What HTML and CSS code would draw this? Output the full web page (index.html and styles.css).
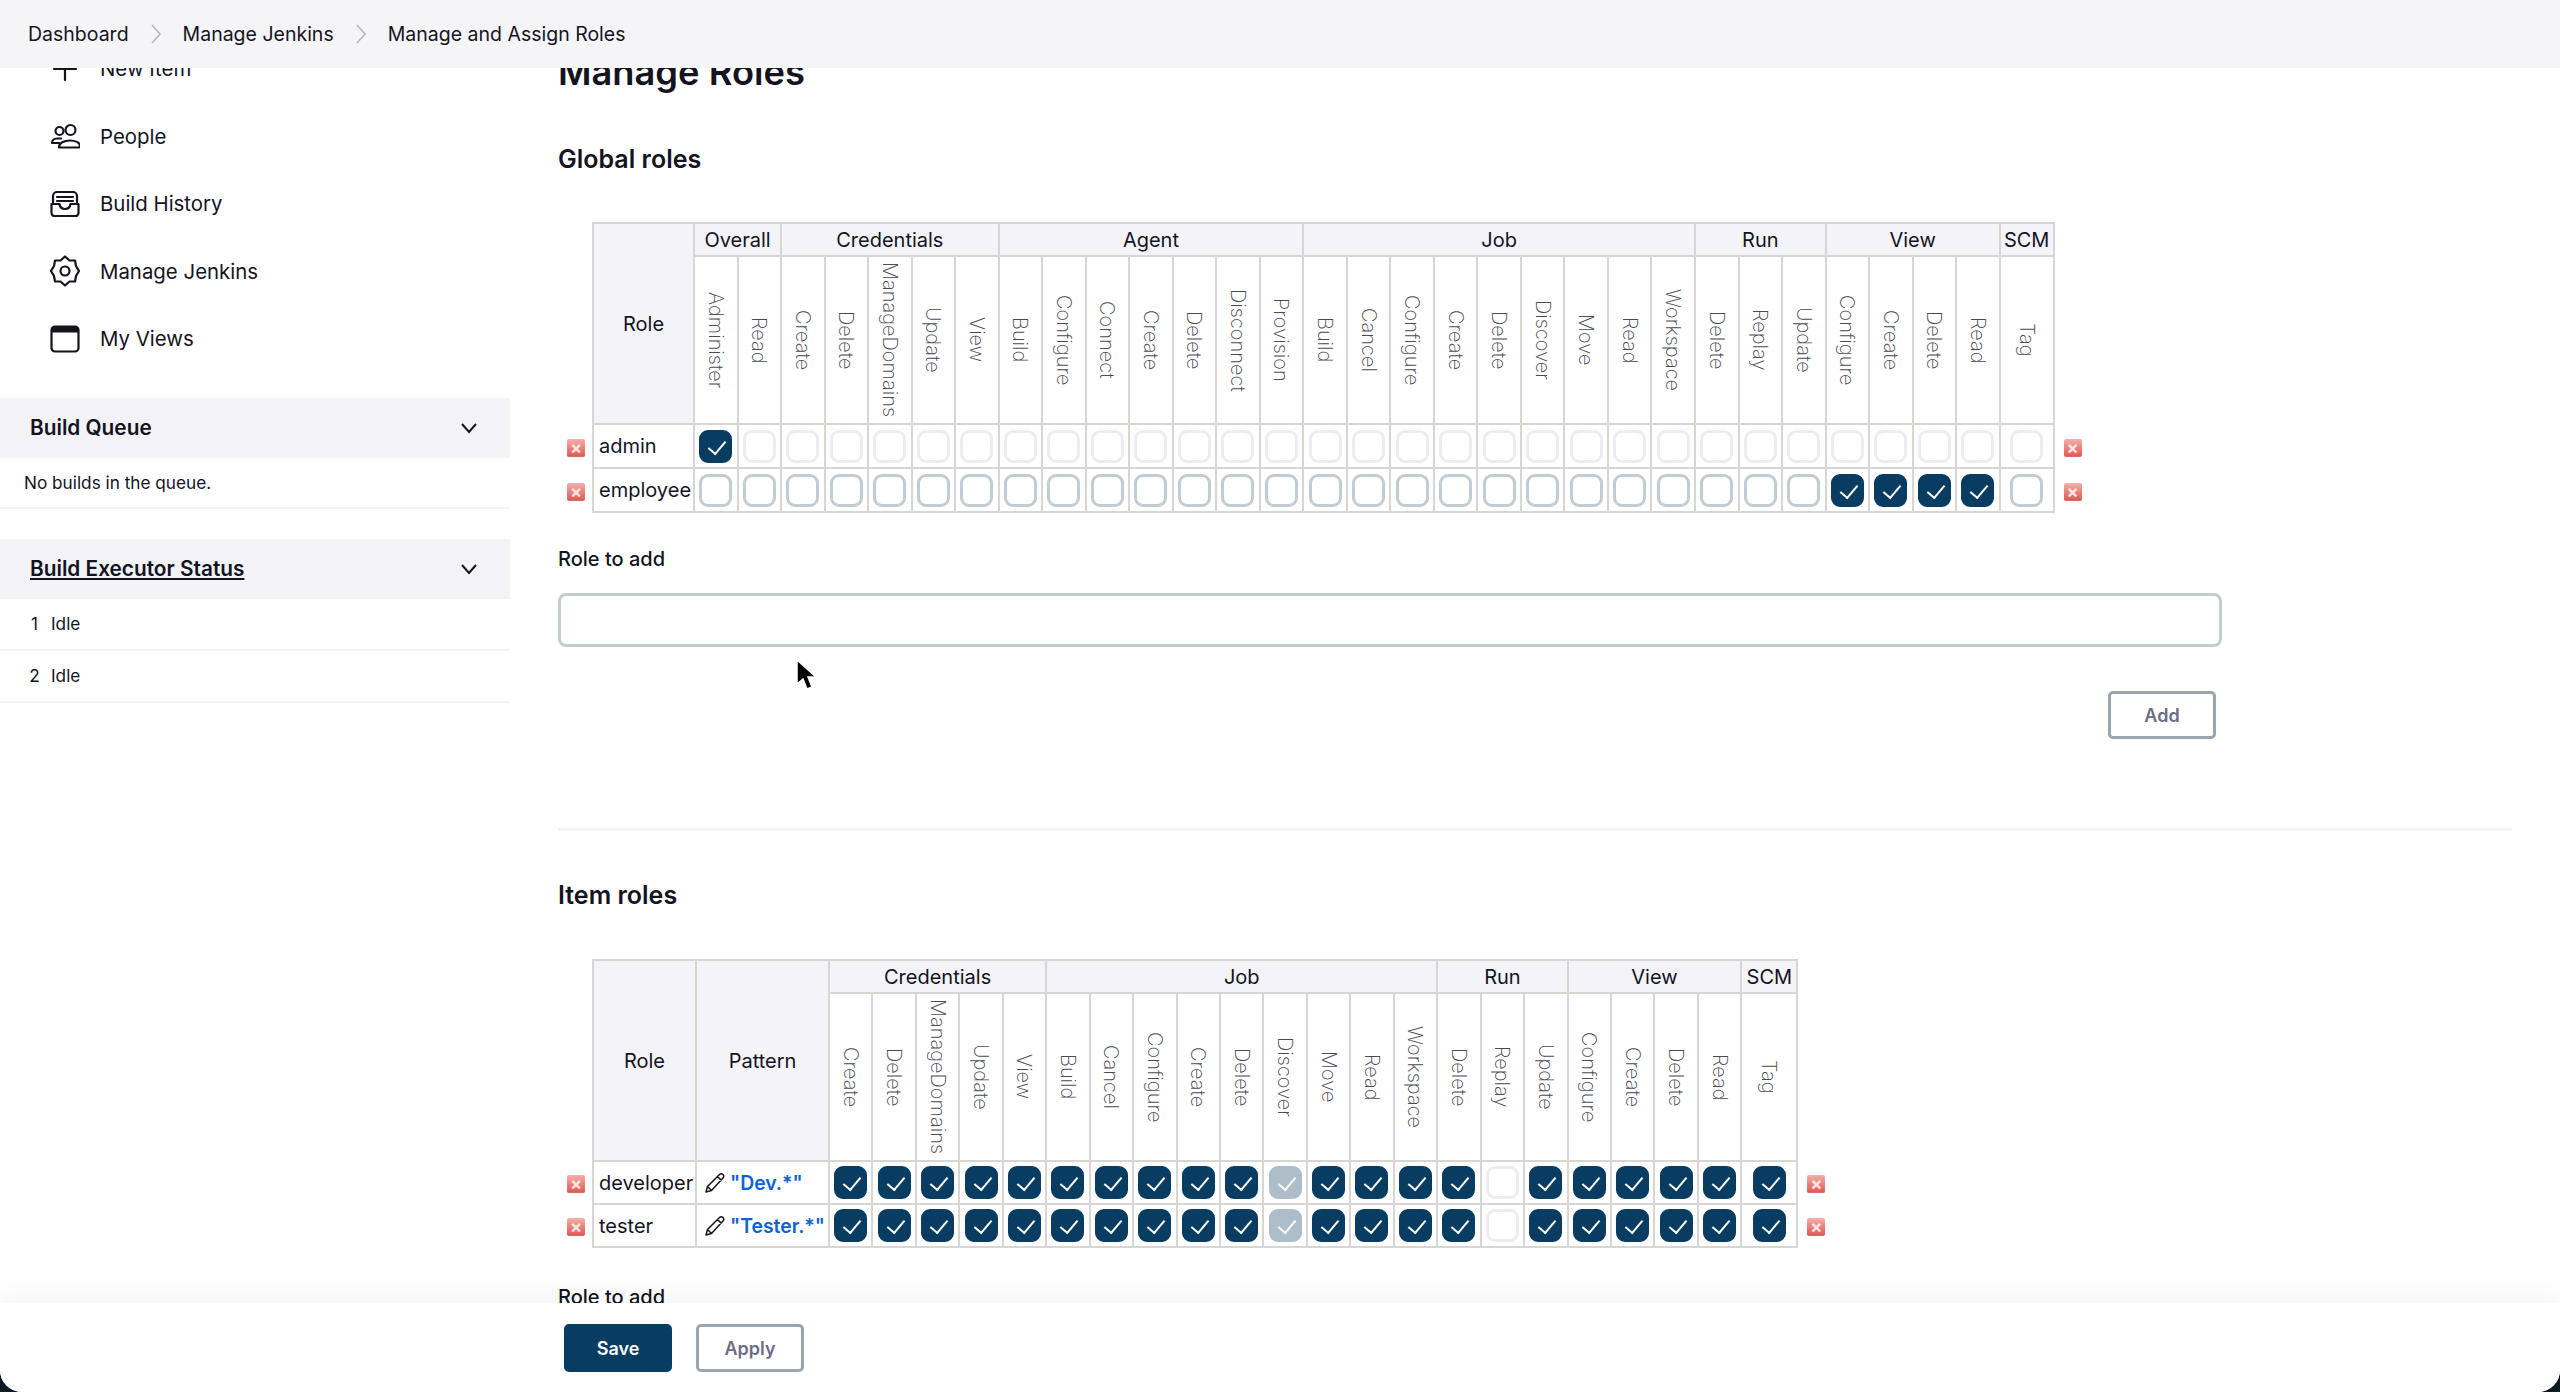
FILE: index.html
```html
<!DOCTYPE html>
<html lang="en">
<head>
<meta charset="utf-8">
<title>Manage and Assign Roles</title>
<link rel="stylesheet" href="styles.css">
</head>
<body>
<div class="window">
<header class="crumbs">
  <a class="crumb">Dashboard</a>
  <svg class="sep" viewBox="0 0 12 22"><path d="M2 2l8 9-8 9"/></svg>
  <a class="crumb">Manage Jenkins</a>
  <svg class="sep" viewBox="0 0 12 22"><path d="M2 2l8 9-8 9"/></svg>
  <a class="crumb">Manage and Assign Roles</a>
</header>
<div class="page">
  <aside class="side">
    <nav class="tasks">
      <a class="task"><svg class="ico" viewBox="0 0 30 30"><path d="M15 4v22M4 15h22"/></svg>New Item</a>
      <a class="task"><svg class="ico" viewBox="0 0 30 24"><circle cx="9.500" cy="7" r="4"/><circle cx="20.500" cy="6" r="5"/><path d="M11 14.500H7c-3 0-5 2-5 4.500h7M9 23.500c0-4.500 5-7 11-7s10 2.500 10 5.500c0 1-.8 1.500-2 1.500z"/></svg>People</a>
      <a class="task"><svg class="ico" viewBox="0 0 30 26"><path d="M3 13V5a4 4 0 0 1 4-4h16a4 4 0 0 1 4 4v8M1.500 13h8c.5 3.500 2.500 5 5.500 5s5-1.500 5.500-5h8v9a3 3 0 0 1-3 3h-21a3 3 0 0 1-3-3zM7 6h16M7 10h16"/></svg>Build History</a>
      <a class="task"><svg class="ico" viewBox="0 0 30 32"><path d="M15 1.500l4.500 4H25l1 5.500 3 5-3 5-1 5.500h-5.500l-4.500 4-4.500-4H5L4 21l-3-5 3-5 1-5.500h5.500z"/><circle cx="15" cy="16" r="4.500"/></svg>Manage Jenkins</a>
      <a class="task"><svg class="ico" viewBox="0 0 30 28"><rect x="1.500" y="1.500" width="27" height="25" rx="3.500"/><path class="bar-top" d="M1.500 5A3.500 3.500 0 0 1 5 1.500h20A3.500 3.500 0 0 1 28.500 5v2.500h-27z"/></svg>My Views</a>
    </nav>
    <section class="pane queue">
      <div class="pane-head"><span class="pane-title">Build Queue</span><svg class="chev" viewBox="0 0 18 12"><path d="M2 2l7 8 7-8"/></svg></div>
      <div class="pane-row empty">No builds in the queue.</div>
    </section>
    <section class="pane">
      <div class="pane-head"><a class="pane-title link">Build Executor Status</a><svg class="chev" viewBox="0 0 18 12"><path d="M2 2l7 8 7-8"/></svg></div>
      <div class="pane-row exec"><span class="num">1</span>Idle</div>
      <div class="pane-row exec"><span class="num">2</span>Idle</div>
    </section>
  </aside>
  <main class="main">
    <h1 class="title">Manage Roles</h1>
    <h2 class="section">Global roles</h2>
    <table class="grid global">
      <colgroup><col class="c-edge"><col class="c-role"><col span="30" class="c-perm"><col class="c-scm"><col class="c-edge2"></colgroup>
      <thead>
        <tr class="groups">
          <th class="edge" rowspan="2"></th><th class="head" rowspan="2">Role</th>
          <th class="head" colspan="2">Overall</th><th class="head" colspan="5">Credentials</th><th class="head" colspan="7">Agent</th><th class="head" colspan="9">Job</th><th class="head" colspan="3">Run</th><th class="head" colspan="4">View</th><th class="head">SCM</th>
          <th class="edge" rowspan="2"></th>
        </tr>
        <tr class="perms">
          <th><span>Administer</span></th><th><span>Read</span></th>
          <th><span>Create</span></th><th><span>Delete</span></th><th><span>ManageDomains</span></th><th><span>Update</span></th><th><span>View</span></th>
          <th><span>Build</span></th><th><span>Configure</span></th><th><span>Connect</span></th><th><span>Create</span></th><th><span>Delete</span></th><th><span>Disconnect</span></th><th><span>Provision</span></th>
          <th><span>Build</span></th><th><span>Cancel</span></th><th><span>Configure</span></th><th><span>Create</span></th><th><span>Delete</span></th><th><span>Discover</span></th><th><span>Move</span></th><th><span>Read</span></th><th><span>Workspace</span></th>
          <th><span>Delete</span></th><th><span>Replay</span></th><th><span>Update</span></th>
          <th><span>Configure</span></th><th><span>Create</span></th><th><span>Delete</span></th><th><span>Read</span></th>
          <th><span>Tag</span></th>
        </tr>
      </thead>
      <tbody>
        <tr>
          <td class="edge"><span class="del">×</span></td><td class="name">admin</td>
          <td><input class="cb" type="checkbox" checked></td><td><input class="cb" type="checkbox" disabled></td><td><input class="cb" type="checkbox" disabled></td><td><input class="cb" type="checkbox" disabled></td><td><input class="cb" type="checkbox" disabled></td><td><input class="cb" type="checkbox" disabled></td><td><input class="cb" type="checkbox" disabled></td><td><input class="cb" type="checkbox" disabled></td><td><input class="cb" type="checkbox" disabled></td><td><input class="cb" type="checkbox" disabled></td><td><input class="cb" type="checkbox" disabled></td><td><input class="cb" type="checkbox" disabled></td><td><input class="cb" type="checkbox" disabled></td><td><input class="cb" type="checkbox" disabled></td><td><input class="cb" type="checkbox" disabled></td><td><input class="cb" type="checkbox" disabled></td><td><input class="cb" type="checkbox" disabled></td><td><input class="cb" type="checkbox" disabled></td><td><input class="cb" type="checkbox" disabled></td><td><input class="cb" type="checkbox" disabled></td><td><input class="cb" type="checkbox" disabled></td><td><input class="cb" type="checkbox" disabled></td><td><input class="cb" type="checkbox" disabled></td><td><input class="cb" type="checkbox" disabled></td><td><input class="cb" type="checkbox" disabled></td><td><input class="cb" type="checkbox" disabled></td><td><input class="cb" type="checkbox" disabled></td><td><input class="cb" type="checkbox" disabled></td><td><input class="cb" type="checkbox" disabled></td><td><input class="cb" type="checkbox" disabled></td><td><input class="cb" type="checkbox" disabled></td>
          <td class="edge right"><span class="del">×</span></td>
        </tr>
        <tr>
          <td class="edge"><span class="del">×</span></td><td class="name">employee</td>
          <td><input class="cb" type="checkbox"></td><td><input class="cb" type="checkbox"></td><td><input class="cb" type="checkbox"></td><td><input class="cb" type="checkbox"></td><td><input class="cb" type="checkbox"></td><td><input class="cb" type="checkbox"></td><td><input class="cb" type="checkbox"></td><td><input class="cb" type="checkbox"></td><td><input class="cb" type="checkbox"></td><td><input class="cb" type="checkbox"></td><td><input class="cb" type="checkbox"></td><td><input class="cb" type="checkbox"></td><td><input class="cb" type="checkbox"></td><td><input class="cb" type="checkbox"></td><td><input class="cb" type="checkbox"></td><td><input class="cb" type="checkbox"></td><td><input class="cb" type="checkbox"></td><td><input class="cb" type="checkbox"></td><td><input class="cb" type="checkbox"></td><td><input class="cb" type="checkbox"></td><td><input class="cb" type="checkbox"></td><td><input class="cb" type="checkbox"></td><td><input class="cb" type="checkbox"></td><td><input class="cb" type="checkbox"></td><td><input class="cb" type="checkbox"></td><td><input class="cb" type="checkbox"></td><td><input class="cb" type="checkbox" checked></td><td><input class="cb" type="checkbox" checked></td><td><input class="cb" type="checkbox" checked></td><td><input class="cb" type="checkbox" checked></td><td><input class="cb" type="checkbox"></td>
          <td class="edge right"><span class="del">×</span></td>
        </tr>
      </tbody>
    </table>
    <label class="field-label">Role to add</label>
    <input class="text" type="text">
    <div class="add-row"><button class="btn" type="button">Add</button></div>
    <hr class="rule">
    <h2 class="section item">Item roles</h2>
    <table class="grid items">
      <colgroup><col class="c-edge"><col class="c-role2"><col class="c-pattern"><col span="21" class="c-perm2"><col class="c-scm2"><col class="c-edge2"></colgroup>
      <thead>
        <tr class="groups">
          <th class="edge" rowspan="2"></th><th class="head" rowspan="2">Role</th><th class="head" rowspan="2">Pattern</th>
          <th class="head" colspan="5">Credentials</th><th class="head" colspan="9">Job</th><th class="head" colspan="3">Run</th><th class="head" colspan="4">View</th><th class="head">SCM</th>
          <th class="edge" rowspan="2"></th>
        </tr>
        <tr class="perms">
          <th><span>Create</span></th><th><span>Delete</span></th><th><span>ManageDomains</span></th><th><span>Update</span></th><th><span>View</span></th>
          <th><span>Build</span></th><th><span>Cancel</span></th><th><span>Configure</span></th><th><span>Create</span></th><th><span>Delete</span></th><th><span>Discover</span></th><th><span>Move</span></th><th><span>Read</span></th><th><span>Workspace</span></th>
          <th><span>Delete</span></th><th><span>Replay</span></th><th><span>Update</span></th>
          <th><span>Configure</span></th><th><span>Create</span></th><th><span>Delete</span></th><th><span>Read</span></th>
          <th><span>Tag</span></th>
        </tr>
      </thead>
      <tbody>
        <tr>
          <td class="edge"><span class="del">×</span></td><td class="name">developer</td>
          <td class="pattern"><svg class="pen" viewBox="0 0 20 20"><path d="M1 19l1.500-5.500L14.500 1.500c1-1 2.500-1 3.500 0s1 2.500 0 3.500L6.500 17.500zM12.500 3.500l4 4M2.500 13.500l4 4"/></svg><a class="regex">"Dev.*"</a></td>
          <td><input class="cb" type="checkbox" checked></td><td><input class="cb" type="checkbox" checked></td><td><input class="cb" type="checkbox" checked></td><td><input class="cb" type="checkbox" checked></td><td><input class="cb" type="checkbox" checked></td><td><input class="cb" type="checkbox" checked></td><td><input class="cb" type="checkbox" checked></td><td><input class="cb" type="checkbox" checked></td><td><input class="cb" type="checkbox" checked></td><td><input class="cb" type="checkbox" checked></td><td><input class="cb" type="checkbox" checked disabled></td><td><input class="cb" type="checkbox" checked></td><td><input class="cb" type="checkbox" checked></td><td><input class="cb" type="checkbox" checked></td><td><input class="cb" type="checkbox" checked></td><td><input class="cb" type="checkbox" disabled></td><td><input class="cb" type="checkbox" checked></td><td><input class="cb" type="checkbox" checked></td><td><input class="cb" type="checkbox" checked></td><td><input class="cb" type="checkbox" checked></td><td><input class="cb" type="checkbox" checked></td><td><input class="cb" type="checkbox" checked></td>
          <td class="edge right"><span class="del">×</span></td>
        </tr>
        <tr>
          <td class="edge"><span class="del">×</span></td><td class="name">tester</td>
          <td class="pattern"><svg class="pen" viewBox="0 0 20 20"><path d="M1 19l1.500-5.500L14.500 1.500c1-1 2.500-1 3.500 0s1 2.500 0 3.500L6.500 17.500zM12.500 3.500l4 4M2.500 13.500l4 4"/></svg><a class="regex">"Tester.*"</a></td>
          <td><input class="cb" type="checkbox" checked></td><td><input class="cb" type="checkbox" checked></td><td><input class="cb" type="checkbox" checked></td><td><input class="cb" type="checkbox" checked></td><td><input class="cb" type="checkbox" checked></td><td><input class="cb" type="checkbox" checked></td><td><input class="cb" type="checkbox" checked></td><td><input class="cb" type="checkbox" checked></td><td><input class="cb" type="checkbox" checked></td><td><input class="cb" type="checkbox" checked></td><td><input class="cb" type="checkbox" checked disabled></td><td><input class="cb" type="checkbox" checked></td><td><input class="cb" type="checkbox" checked></td><td><input class="cb" type="checkbox" checked></td><td><input class="cb" type="checkbox" checked></td><td><input class="cb" type="checkbox" disabled></td><td><input class="cb" type="checkbox" checked></td><td><input class="cb" type="checkbox" checked></td><td><input class="cb" type="checkbox" checked></td><td><input class="cb" type="checkbox" checked></td><td><input class="cb" type="checkbox" checked></td><td><input class="cb" type="checkbox" checked></td>
          <td class="edge right"><span class="del">×</span></td>
        </tr>
      </tbody>
    </table>
    <label class="field-label second">Role to add</label>
  </main>
</div>
<svg class="cursor" viewBox="0 0 22 32"><path d="M2 1v24l6-5 4 10 5-2-4-10h8z"/></svg>
<footer class="bar">
  <button class="btn primary" type="button">Save</button>
  <button class="btn" type="button">Apply</button>
</footer>
</div>
</body>
</html>
```
FILE: styles.css
```css
* { box-sizing: border-box; }
html, body { margin: 0; height: 100%; }
body {
  width: 2560px;
  height: 1392px;
  overflow: hidden;
  background: #0c1a28;
  color: #14141f;
  font-family: Inter, "Liberation Sans", sans-serif;
}
a { color: inherit; text-decoration: none; }

.window {
  position: relative;
  height: 1392px;
  overflow: hidden;
  background: #fff;
  border-radius: 0 0 22px 22px;
}

.crumbs {
  position: absolute;
  top: 0; left: 0; right: 0;
  height: 68px;
  z-index: 3;
  display: flex;
  align-items: center;
  padding-left: 28px;
  background: #f5f5f8;
  font-size: 19.5px;
}
.sep { width: 12px; height: 22px; margin: 0 21px 0 21px; fill: none; stroke: #b7b7c4; stroke-width: 1.6; }

.page { display: flex; height: 1392px; }

.side { width: 510px; flex: none; padding-top: 35px; }
.tasks { display: flex; flex-direction: column; }
.task {
  height: 67.5px;
  display: flex;
  align-items: center;
  gap: 20px;
  padding-left: 50px;
  font-size: 20.4px;
}
.ico { width: 30px; height: 36px; flex: none; fill: none; stroke: #14141f; stroke-width: 2.2; stroke-linecap: round; stroke-linejoin: round; }
.ico .bar-top { fill: #14141f; stroke-width: 0; }

.pane { border-top: 2px solid #f3f3f7; }
.queue { margin-top: 25px; margin-bottom: 30px; }
.pane-head {
  height: 58px;
  padding: 0 32px 2px 30px;
  display: flex;
  align-items: center;
  justify-content: space-between;
  background: #f2f2f7;
}
.pane-title { font-size: 20.8px; font-weight: 600; }
.link { text-decoration: underline; text-underline-offset: 2px; text-decoration-thickness: 2px; }
.chev { width: 18px; height: 12px; fill: none; stroke: #14141f; stroke-width: 2; }
.pane-row { border-bottom: 2px solid #f3f3f7; font-size: 17.2px; display: flex; align-items: center; }
.empty { height: 51px; padding-left: 24px; }
.exec { height: 52px; padding-left: 29px; }
.num { width: 11px; text-align: center; margin-right: 11px; }

.main { flex: 1; min-width: 0; padding: 51px 48px 0; position: relative; }
.title { margin: 0; font-size: 36.3px; line-height: 42px; font-weight: 600; }
.section { margin: 50px 0 0; font-size: 25px; line-height: 32px; font-weight: 600; }
.section.item { margin-top: 48px; }

.grid {
  margin-top: 47px;
  table-layout: fixed;
  border-collapse: collapse;
  font-size: 20px;
}
.global { width: 1531px; }
.items { width: 1273px; margin-top: 48px; }
.c-edge { width: 35px; }
.c-role { width: 101px; }
.c-perm { width: 43.53px; }
.c-scm { width: 54px; }
.c-edge2 { width: 35px; }
.c-role2 { width: 103px; }
.c-pattern { width: 133px; }
.c-perm2 { width: 43.45px; }
.c-scm2 { width: 56px; }

.grid th, .grid td { border: 2px solid #d6d6d2; padding: 0; text-align: center; }
.grid th.edge, .grid td.edge { border-top: none; border-bottom: none; border-left: none; text-align: left; }
.grid td.right, .grid th:last-child.edge { border-right: none; }
.groups th { height: 33px; }
.head { background: #f3f3f8; font-weight: 400; }
.perms th { height: 168px; background: #fff; font-weight: 200; }
.perms span {
  display: inline-block;
  writing-mode: vertical-rl;
  color: #4a4a55;
  font-size: 20px;
  line-height: 24px;
  vertical-align: middle;
}
.global tbody tr { height: 44px; }
.items tbody tr { height: 43px; }
.grid .name { text-align: left; padding-left: 5px; white-space: nowrap; }
.grid .pattern { text-align: left; white-space: nowrap; }
.pen { width: 20px; height: 20px; margin: 0 5px 0 8px; vertical-align: -3px; fill: none; stroke: #14141f; stroke-width: 1.5; stroke-linejoin: round; }
.regex { color: #0b62d6; font-weight: 600; font-size: 19.4px; }

.del {
  display: block;
  width: 18px; height: 18px;
  margin: 3px 0 0 9px;
  border-radius: 2px;
  background: linear-gradient(#f3b0ab, #e15a55);
  border-bottom: 1px solid #d96a66;
  color: #fbe6e4;
  font-size: 18px;
  font-weight: 700;
  line-height: 17px;
  text-align: center;
}

.cb {
  -webkit-appearance: none;
  appearance: none;
  display: block;
  position: relative;
  width: 33px; height: 33px;
  margin: 0 auto;
  border: 3px solid #c3ccd3;
  border-radius: 9px;
  background: #fff;
}
.cb:disabled { border-color: #ecedf0; }
.cb:checked { background: #083d61; border-color: #083d61; }
.cb:checked:disabled { background: #adbdc9; border-color: #adbdc9; }
.cb:checked::after {
  content: "";
  position: absolute;
  left: 10px; top: 4px;
  width: 8px; height: 15px;
  border: solid #fff;
  border-width: 0 2.6px 2.6px 0;
  transform: rotate(40deg);
}

.field-label { display: block; font-size: 20px; line-height: 26px; font-weight: 500; margin-top: 33px; }
.text {
  display: block;
  width: 1664px; height: 54px;
  margin-top: 21px;
  border: 3px solid #c3ccd1;
  border-radius: 8px;
  background: #fff;
}
.add-row { display: flex; justify-content: flex-end; width: 1658px; margin-top: 44px; }
.btn {
  width: 108px; height: 48px;
  padding: 0;
  border: 3px solid #9aa6af;
  border-radius: 5px;
  background: #fff;
  color: #6d6b85;
  font: 600 18px Inter, "Liberation Sans", sans-serif;
}
.btn.primary { background: #083d61; border-color: #083d61; color: #fff; }
.rule { margin: 89px 0 0; height: 3px; border: 0; background: #f3f3f7; }

.field-label.second { margin-top: 36px; }

.bar {
  position: absolute;
  left: 0; right: 0; bottom: 0;
  height: 89px;
  z-index: 2;
  display: flex;
  gap: 24px;
  padding: 21px 0 0 564px;
  background: #fff;
  box-shadow: 0 -12px 24px rgba(20, 20, 31, .035);
}
.cursor { position: absolute; left: 795px; top: 659px; width: 22px; height: 32px; z-index: 4; fill: #000; stroke: #fff; stroke-width: 1.5; }
```
